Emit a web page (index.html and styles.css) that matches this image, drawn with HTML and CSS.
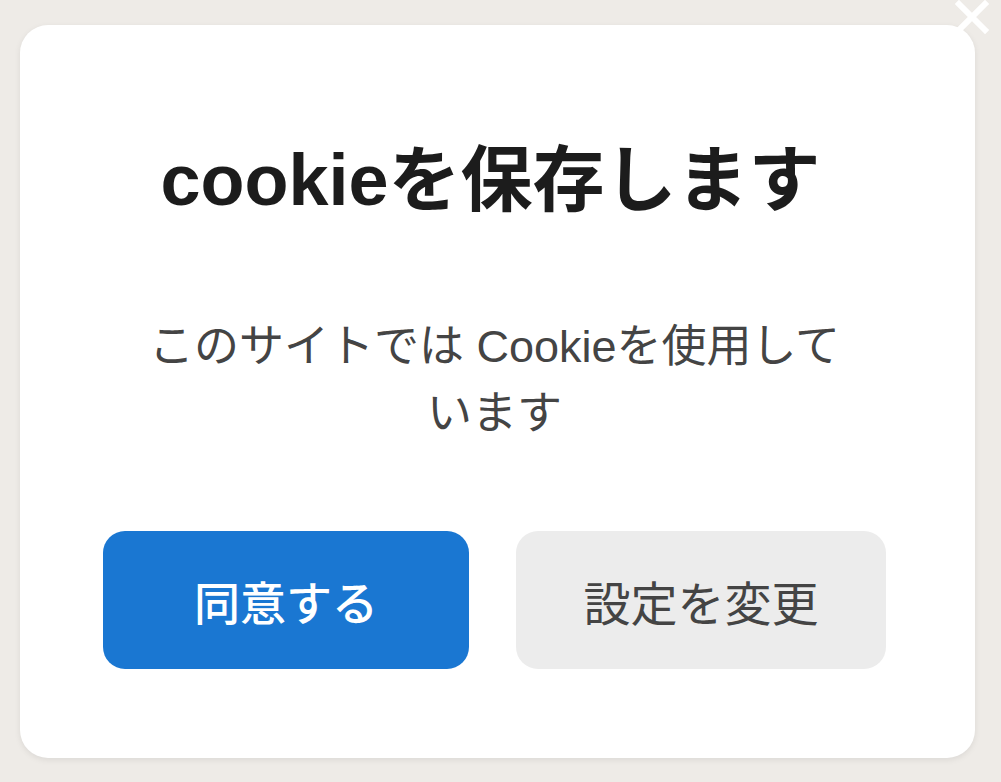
FILE: index.html
```html
<!DOCTYPE html>
<html lang="ja">

<head>
    <title>cookieを保存します</title>
    <link rel="stylesheet" href="styles.css">
</head>

<body>
    <div class="consent">
        <button class="close" type="button" aria-label="閉じる">
            <svg width="34" height="34" viewBox="0 0 34 34">
                <path d="M4 4 L30 30 M30 4 L4 30" stroke="#ffffff" stroke-width="6" stroke-linecap="square" />
            </svg>
        </button>
        <h1 class="title">cookieを保存します</h1>
        <p class="text">このサイトでは Cookieを使用しています</p>
        <div class="actions">
            <button type="button" class="btn btn-accept">同意する</button>
            <button type="button" class="btn btn-settings">設定を変更</button>
        </div>
    </div>
</body>

</html>
```

FILE: styles.css
```css
body {
    margin: 0;
    height: 100vh;
    padding: 25px 26px 0 20px;
    box-sizing: border-box;
    background: #eeebe7;
    font-family: "Liberation Sans", "Noto Sans CJK JP", sans-serif;
    overflow: hidden;
}

.consent {
    position: relative;
    height: 733px;
    box-sizing: border-box;
    padding: 112px 89px 0 83px;
    background: #ffffff;
    border-radius: 28px;
    box-shadow: 0 2px 6px rgba(0, 0, 0, 0.08);
    display: flex;
    flex-direction: column;
    align-items: center;
}

.close {
    position: absolute;
    top: -25px;
    right: -14px;
    padding: 0;
    border: none;
    background: none;
    cursor: pointer;
    line-height: 0;
}

.title {
    margin: 0 0 0 -8px;
    font-size: 72px;
    line-height: 86px;
    font-weight: bold;
    color: #1c1c1c;
    text-align: center;
}

.text {
    margin: 90px 0 0;
    max-width: 720px;
    font-size: 45px;
    line-height: 67px;
    color: #444444;
    text-align: center;
}

.actions {
    margin-top: 84px;
    display: flex;
    gap: 47px;
}

.btn {
    width: 366px;
    height: 138px;
    border: none;
    border-radius: 22px;
    font-family: inherit;
    font-size: 46px;
    cursor: pointer;
}

.btn-accept {
    background: #1a77d2;
    color: #ffffff;
    font-weight: 500;
}

.btn-settings {
    width: 370px;
    background: #ececec;
    color: #444444;
    font-size: 47px;
}
```
